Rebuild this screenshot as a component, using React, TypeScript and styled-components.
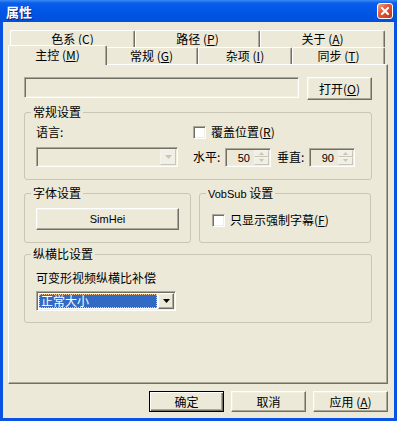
import React from 'react';
import styled, { createGlobalStyle, css } from 'styled-components';

const GlobalStyle = createGlobalStyle`
  html, body { margin: 0; padding: 0; background: #ECE9D8; }
  body {
    font-family: "Noto Sans CJK SC", "DejaVu Sans", sans-serif;
    font-size: 12px;
    color: #000;
  }
  * { box-sizing: border-box; }
`;

const raised = css`
  border: 1px solid;
  border-color: #fff #716F64 #716F64 #fff;
  box-shadow: inset -1px -1px 0 #ACA899, inset 1px 1px 0 #F1EFE2;
`;

const sunken = css`
  border: 1px solid;
  border-color: #ACA899 #fff #fff #ACA899;
  box-shadow: inset 1px 1px 0 #716F64, inset -1px -1px 0 #F1EFE2;
`;

const Window = styled.div`
  width: 397px;
  height: 421px;
  display: flex;
  flex-direction: column;
  background: #0A53E2;
`;

const TitleBar = styled.div`
  height: 22px;
  flex: none;
  display: flex;
  align-items: center;
  padding: 0 4px 0 6px;
  background: linear-gradient(#3B8CF5 0, #0A5EEB 3px, #0056E6 50%, #0050DB 100%);
`;

const Title = styled.div`
  color: #fff;
  font-weight: bold;
  font-size: 13px;
  text-shadow: 1px 1px 0 #0A1E7A;
`;

const CloseButton = styled.div`
  margin-left: auto;
  width: 16px;
  height: 16px;
  border: 1px solid #fff;
  border-radius: 3px;
  background: linear-gradient(135deg, #F0A48C 0, #E25A3B 40%, #C2351A 100%);
  display: flex;
  align-items: center;
  justify-content: center;
`;

const Body = styled.div`
  flex: 1;
  margin: 0 3px 3px;
  background: #ECE9D8;
  display: flex;
  flex-direction: column;
  padding: 8px 6px 6px 5px;
`;

const TabStrip = styled.div`
  display: flex;
  flex-direction: column;
  padding: 0 3px 0 2px;
`;

const TabRow = styled.div`
  display: flex;
  height: 17px;
`;

const Tab = styled.div<{ $w?: number; $active?: boolean }>`
  flex: ${p => (p.$w ? `0 0 ${p.$w}px` : '1 1 0')};
  height: 17px;
  border-top: 1px solid #fff;
  border-left: 1px solid #fff;
  border-right: 1px solid #716F64;
  border-radius: 2px 2px 0 0;
  box-shadow: inset -1px 0 0 #ACA899;
  background: #ECE9D8;
  display: flex;
  align-items: center;
  justify-content: center;
  white-space: nowrap;
  line-height: 14px;
  ${p =>
    p.$active &&
    css`
      flex-basis: ${(p.$w ?? 0) + 4}px;
      height: 20px;
      margin: -2px -2px -1px;
      padding-bottom: 2px;
      position: relative;
      z-index: 1;
    `}
`;

const Panel = styled.div`
  flex: 1;
  border: 1px solid;
  border-color: #fff #716F64 #716F64 #fff;
  box-shadow: inset -1px -1px 0 #ACA899;
  display: flex;
  flex-direction: column;
  padding: 12px 15px 0;
`;

const PathRow = styled.div`
  display: flex;
  gap: 8px;
  align-items: flex-start;
`;

const Field = styled.div<{ $disabled?: boolean; $w?: number; $h?: number }>`
  ${sunken};
  background: ${p => (p.$disabled ? '#ECE9D8' : '#fff')};
  ${p => p.$w && `width: ${p.$w}px;`}
  height: ${p => p.$h ?? 20}px;
  display: flex;
  padding: 1px;
`;

const PathInput = styled(Field)`
  flex: 1;
`;

const Button = styled.button<{ $w?: number; $h?: number; $default?: boolean }>`
  ${raised};
  width: ${p => (p.$w ? `${p.$w}px` : '100%')};
  height: ${p => p.$h ?? 22}px;
  flex: none;
  background: #ECE9D8;
  font: inherit;
  color: #000;
  padding: 0;
  display: flex;
  align-items: center;
  justify-content: center;
  white-space: nowrap;
  ${p =>
    p.$default &&
    css`
      border-color: #000;
      box-shadow: inset 1px 1px 0 #fff, inset -1px -1px 0 #716F64, inset -2px -2px 0 #ACA899;
    `}
`;

const Group = styled.fieldset<{ $h: number; $w?: number }>`
  margin: 0;
  padding: 0;
  min-width: 0;
  height: ${p => p.$h}px;
  flex: ${p => (p.$w ? `0 0 ${p.$w}px` : 'none')};
  border: 1px solid #C9C6B6;
  border-radius: 3px;
`;

const Legend = styled.legend`
  margin-left: 6px;
  padding: 0 2px;
  line-height: 14px;
  font-size: 12px;
  white-space: nowrap;
`;

const GeneralGroup = styled(Group)`
  margin-top: 5px;
`;

const GeneralGrid = styled.div`
  display: grid;
  grid-template-columns: 142px auto;
  grid-template-rows: 16px 20px;
  column-gap: 15px;
  row-gap: 7px;
  padding: 5px 0 0 11px;
`;

const Text = styled.div`
  line-height: 16px;
  white-space: nowrap;
`;

const CheckRow = styled.label`
  display: flex;
  align-items: center;
  gap: 5px;
  height: 16px;
  line-height: 16px;
  white-space: nowrap;
`;

const CheckBox = styled.span`
  ${sunken};
  flex: none;
  width: 13px;
  height: 13px;
  background: #fff;
`;

const ComboValue = styled.div<{ $selected?: boolean }>`
  flex: 1;
  margin: 1px;
  line-height: 14px;
  padding-left: 2px;
  white-space: nowrap;
  ${p =>
    p.$selected &&
    css`
      background: #316AC5;
      color: #fff;
      outline: 1px dotted #F3C88A;
      outline-offset: -1px;
    `}
`;

const DropButton = styled.div<{ $disabled?: boolean }>`
  flex: 0 0 16px;
  ${raised};
  background: #ECE9D8;
  display: flex;
  align-items: center;
  justify-content: center;
  ${p =>
    p.$disabled &&
    css`
      border-color: #F4F3EE #C9C6B6 #C9C6B6 #F4F3EE;
      box-shadow: none;
      background: #F1EFE6;
    `}
`;

const SpinRow = styled.div`
  display: flex;
  align-items: center;
`;

const SpinLabel = styled.div<{ $gap?: number }>`
  width: 32px;
  margin-left: ${p => p.$gap ?? 0}px;
  line-height: 16px;
  white-space: nowrap;
`;

const SpinValue = styled.div`
  flex: 1;
  text-align: right;
  padding-right: 4px;
  font-family: "Liberation Sans", Arial, sans-serif;
  font-size: 11px;
  line-height: 16px;
`;

const SpinButtons = styled.div`
  flex: 0 0 15px;
  display: flex;
  flex-direction: column;
`;

const SpinHalf = styled.div`
  flex: 1;
  border: 1px solid;
  border-color: #F4F3EE #C9C6B6 #C9C6B6 #F4F3EE;
  background: #F1EFE6;
  display: flex;
  align-items: center;
  justify-content: center;
`;

const TwinRow = styled.div`
  display: flex;
  gap: 8px;
  margin-top: 6px;
`;

const GroupBody = styled.div<{ $pad: string }>`
  padding: ${p => p.$pad};
`;

const AspectGroup = styled(Group)`
  margin-top: 4px;
`;

const ComboLabel = styled.div`
  line-height: 14px;
  margin-bottom: 6px;
  white-space: nowrap;
`;

const Latin = styled.span`
  font-family: "Liberation Sans", Arial, sans-serif;
  font-size: 11px;
`;

const Key = styled.span`
  text-decoration: underline;
  text-underline-offset: 1px;
`;

const ButtonRow = styled.div`
  display: flex;
  justify-content: flex-end;
  gap: 7px;
  margin-top: 7px;
`;

const Arrow = ({ up, color, w = 7 }: { up?: boolean; color: string; w?: number }) => {
  const h = Math.ceil(w / 2);
  const pts = up ? `0,${h} ${w},${h} ${w / 2},0` : `0,0 ${w},0 ${w / 2},${h}`;
  return (
    <svg width={w} height={h} viewBox={`0 0 ${w} ${h}`}>
      <polygon points={pts} fill={color} />
    </svg>
  );
};

const Spin = ({ value }: { value: string }) => (
  <Field $disabled $w={46} $h={19}>
    <SpinValue>{value}</SpinValue>
    <SpinButtons>
      <SpinHalf>
        <Arrow up w={5} color="#C9C6B6" />
      </SpinHalf>
      <SpinHalf>
        <Arrow w={5} color="#C9C6B6" />
      </SpinHalf>
    </SpinButtons>
  </Field>
);

// label text with an underlined access key, e.g. 色系 (C)
const Accel = ({ text, k, sep = '' }: { text: string; k: string; sep?: string }) => (
  <span>
    {text}
    {sep}(<Key>{k}</Key>)
  </span>
);

const backTabs = [
  { label: '色系', key: 'C' },
  { label: '路径', key: 'P' },
  { label: '关于', key: 'A' },
];

const frontTabs = [
  { label: '主控', key: 'M', w: 95, active: true },
  { label: '常规', key: 'G', w: 93 },
  { label: '杂项', key: 'I', w: 94 },
  { label: '同步', key: 'T', w: 93 },
];

export default function App() {
  return (
    <>
      <GlobalStyle />
      <Window>
        <TitleBar>
          <Title>属性</Title>
          <CloseButton>
            <svg width="8" height="8" viewBox="0 0 8 8">
              <path d="M1 1 L7 7 M7 1 L1 7" stroke="#fff" strokeWidth="2" strokeLinecap="square" />
            </svg>
          </CloseButton>
        </TitleBar>
        <Body>
          <TabStrip>
            <TabRow>
              {backTabs.map(t => (
                <Tab key={t.key}>
                  <Accel text={t.label} k={t.key} sep=" " />
                </Tab>
              ))}
            </TabRow>
            <TabRow>
              {frontTabs.map(t => (
                <Tab key={t.key} $w={t.w} $active={t.active}>
                  <Accel text={t.label} k={t.key} sep=" " />
                </Tab>
              ))}
            </TabRow>
          </TabStrip>
          <Panel>
            <PathRow>
              <PathInput $disabled $h={21} />
              <Button $w={65} $h={23}>
                <Accel text="打开" k="O" />
              </Button>
            </PathRow>

            <GeneralGroup $h={75}>
              <Legend>常规设置</Legend>
              <GeneralGrid>
                <Text>语言:</Text>
                <CheckRow>
                  <CheckBox />
                  <Accel text="覆盖位置" k="R" />
                </CheckRow>
                <Field $disabled $w={142} $h={20}>
                  <ComboValue />
                  <DropButton $disabled>
                    <Arrow color="#C9C6B6" />
                  </DropButton>
                </Field>
                <SpinRow>
                  <SpinLabel>水平:</SpinLabel>
                  <Spin value="50" />
                  <SpinLabel $gap={6}>垂直:</SpinLabel>
                  <Spin value="90" />
                </SpinRow>
              </GeneralGrid>
            </GeneralGroup>

            <TwinRow>
              <Group $h={57} $w={167}>
                <Legend>字体设置</Legend>
                <GroupBody $pad="8px 11px 0">
                  <Button $h={22}>
                    <Latin>SimHei</Latin>
                  </Button>
                </GroupBody>
              </Group>
              <Group $h={57} $w={172}>
                <Legend>
                  <Latin>VobSub</Latin> 设置
                </Legend>
                <GroupBody $pad="11px 0 0 12px">
                  <CheckRow>
                    <CheckBox />
                    <Accel text="只显示强制字幕" k="F" />
                  </CheckRow>
                </GroupBody>
              </Group>
            </TwinRow>

            <AspectGroup $h={76}>
              <Legend>纵横比设置</Legend>
              <GroupBody $pad="10px 0 0 11px">
                <ComboLabel>可变形视频纵横比补偿</ComboLabel>
                <Field $w={140} $h={20}>
                  <ComboValue $selected>正常大小</ComboValue>
                  <DropButton>
                    <Arrow color="#000" />
                  </DropButton>
                </Field>
              </GroupBody>
            </AspectGroup>
          </Panel>
          <ButtonRow>
            <Button $w={75} $h={21} $default>
              确定
            </Button>
            <Button $w={75} $h={21}>
              取消
            </Button>
            <Button $w={75} $h={21}>
              <Accel text="应用" k="A" sep=" " />
            </Button>
          </ButtonRow>
        </Body>
      </Window>
    </>
  );
}
